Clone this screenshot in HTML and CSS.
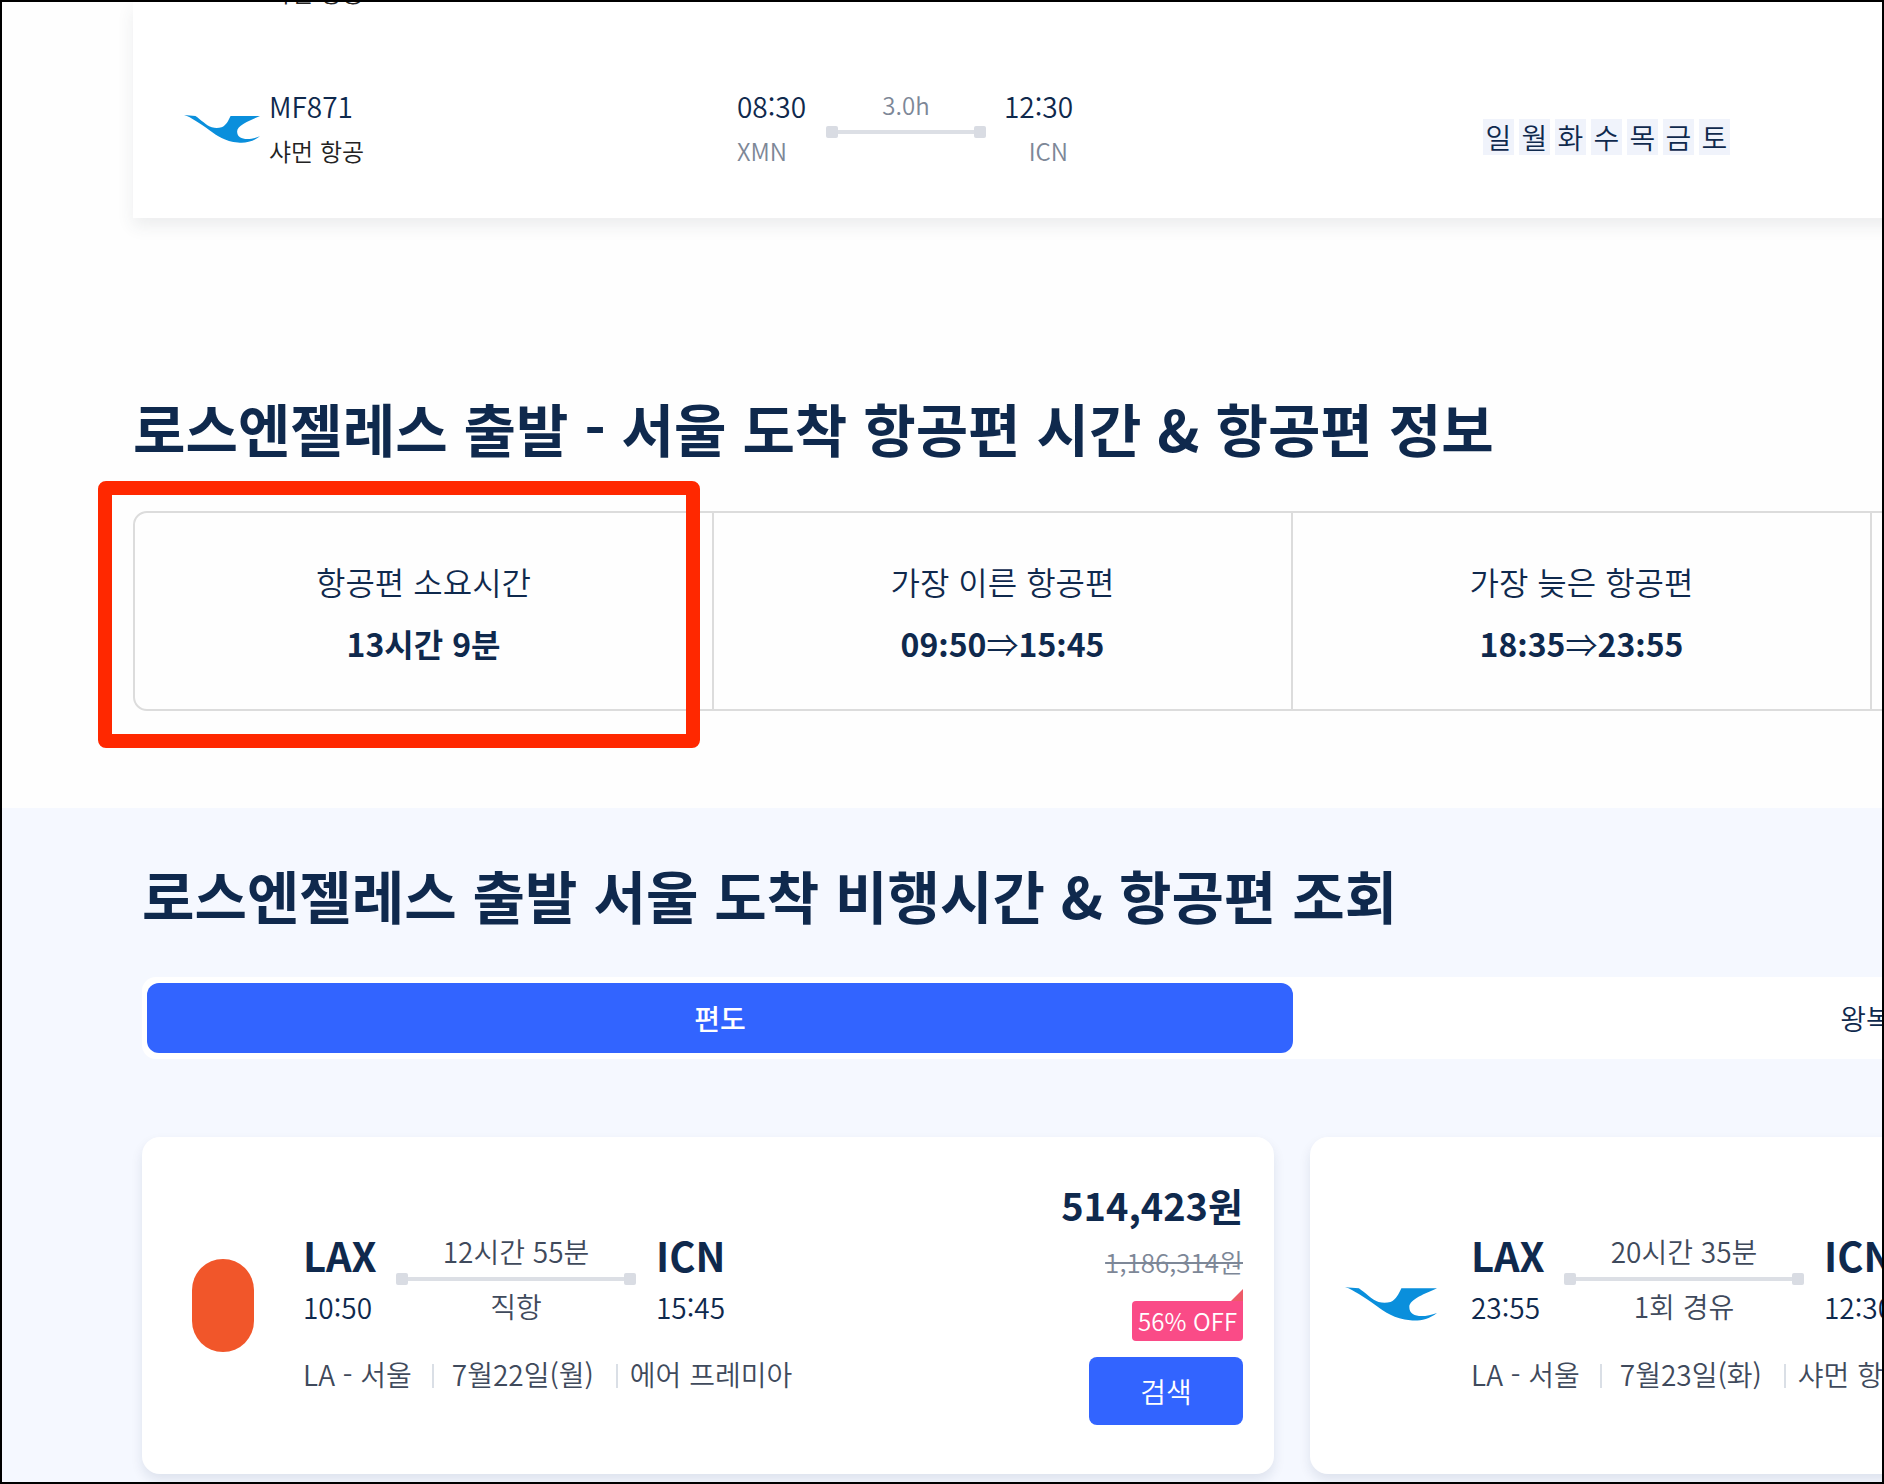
FILE: index.html
```html
<!DOCTYPE html>
<html lang="ko">
<head>
<meta charset="utf-8">
<title>로스엔젤레스 출발 서울 도착 항공편</title>
<link rel="stylesheet" href="styles.css">
</head>
<body>
<svg width="0" height="0" class="defs" aria-hidden="true">
  <symbol id="bird" viewBox="0 0 93 34">
    <path fill="#0a8fdc" d="M0 0 L14 1 C20 5 28 13 34 15 C38 16 42 16 46 15 C52 12 54 7 57 1 L93 1 C82 6 65 12 65 20 C65 31 80 31 93 26 C84 33 74 34.500 66 33.500 C50 32 40 25 32 19 C25 14 20 11 14 7 C9 4 5 1 0 0 Z"/>
  </symbol>
</svg>

<section class="schedule">
  <div class="flight">
    <svg class="logo-sm blank" aria-hidden="true"></svg>
    <p class="airline">샤먼 항공</p>
  </div>
  <div class="flight">
    <svg class="logo-sm" aria-hidden="true"><use href="#bird"/></svg>
    <div class="carrier">
      <p class="code">MF871</p>
      <p class="airline">샤먼 항공</p>
    </div>
    <div class="times">
      <div>
        <p class="code">08:30</p>
        <p class="muted">XMN</p>
      </div>
      <div class="leg">
        <p class="muted">3.0h</p>
        <span class="bar"></span>
      </div>
      <div class="arrive">
        <p class="code">12:30</p>
        <p class="muted">ICN</p>
      </div>
    </div>
    <div class="days"><span>일</span><span>월</span><span>화</span><span>수</span><span>목</span><span>금</span><span>토</span></div>
  </div>
</section>

<section class="facts">
  <h2>로스엔젤레스 출발 - 서울 도착 항공편 시간 &amp; 항공편 정보</h2>
  <div class="fact-area">
    <div class="fact-grid">
      <div class="fact"><p>항공편 소요시간</p><strong>13시간 9분</strong></div>
      <div class="fact"><p>가장 이른 항공편</p><strong>09:50<span class="arrow">⇒</span>15:45</strong></div>
      <div class="fact"><p>가장 늦은 항공편</p><strong>18:35<span class="arrow">⇒</span>23:55</strong></div>
      <div class="fact"></div>
    </div>
    <div class="highlight"></div>
  </div>
</section>

<section class="search">
  <h2>로스엔젤레스 출발 서울 도착 비행시간 &amp; 항공편 조회</h2>
  <div class="tabs">
    <button class="tab active" type="button">편도</button>
    <button class="tab" type="button">왕복</button>
  </div>
  <div class="cards">
    <article class="card">
      <div class="logo"><span class="capsule"></span></div>
      <div class="trip">
        <div class="route">
          <div><p class="airport">LAX</p><p class="clock">10:50</p></div>
          <div class="span"><p>12시간 55분</p><span class="bar"></span><p>직항</p></div>
          <div class="dest"><p class="airport">ICN</p><p class="clock">15:45</p></div>
        </div>
        <p class="meta"><span>LA - 서울</span><span>7월22일(월)</span><span>에어 프레미아</span></p>
      </div>
      <div class="offer">
        <p class="price">514,423원</p>
        <del>1,186,314원</del>
        <span class="badge">56% OFF</span>
        <button class="go" type="button">검색</button>
      </div>
    </article>
    <article class="card">
      <div class="logo"><svg class="bird" aria-hidden="true"><use href="#bird"/></svg></div>
      <div class="trip">
        <div class="route">
          <div><p class="airport">LAX</p><p class="clock">23:55</p></div>
          <div class="span"><p>20시간 35분</p><span class="bar"></span><p>1회 경유</p></div>
          <div class="dest"><p class="airport">ICN</p><p class="clock">12:30</p></div>
        </div>
        <p class="meta"><span>LA - 서울</span><span>7월23일(화)</span><span>샤먼 항공</span></p>
      </div>
    </article>
  </div>
</section>
</body>
</html>
```

FILE: styles.css
```css
* { box-sizing: border-box; }

body {
  margin: 0;
  height: 100vh;
  overflow: hidden;
  border: 2px solid #000;
  background: #fefefe;
  color: #0f294d;
  font-family: "Noto Sans CJK KR", sans-serif;
  font-size: 28px;
  font-weight: 350;
}

p, h2 { margin: 0; }
p { white-space: nowrap; }
.defs { position: absolute; }

h2 {
  font-size: 57px;
  line-height: 72px;
  font-weight: 700;
  white-space: nowrap;
}

/* bar with a square stop at each end */
.bar {
  display: flex;
  justify-content: space-between;
  height: 12px;
  background: linear-gradient(#dcdfe5, #dcdfe5) center / 100% 4px no-repeat;
}
.bar::before, .bar::after {
  content: "";
  width: 12px;
  border-radius: 2px;
  background: #d9dce3;
}

/* weekly schedule */
.schedule {
  display: flex;
  flex-direction: column;
  justify-content: flex-end;
  height: 216px;
  min-width: 2318px;
  margin-left: 131px;
  padding-bottom: 44px;
  background: #fff;
  clip-path: inset(0 0 -40px -40px);
  box-shadow: 0 8px 16px rgba(60, 70, 80, .09);
}
.flight {
  display: flex;
  align-items: center;
  gap: 9px;
  padding-left: 51px;
}
.flight + .flight { margin-top: 69px; }
.logo-sm { width: 76px; height: 28px; }
.code { line-height: 44px; }
.airline { font-size: 24px; line-height: 46px; color: #222; }
.carrier { width: 459px; }
.times {
  display: grid;
  grid-template-columns: 89px 160px auto 1fr;
  width: 737px;
}
.muted { font-size: 24px; line-height: 46px; color: #7d8797; }
.leg { text-align: center; }
.leg .muted { line-height: 42px; }
.arrive { padding-left: 18px; text-align: right; }
.arrive .muted { padding-right: 5px; }
.days { display: flex; gap: 5px; padding-top: 16px; }
.days span {
  width: 31px;
  line-height: 36px;
  text-align: center;
  background: #f0f3fb;
}

/* key facts */
.facts { padding: 173px 0 97px 131px; }
.fact-area { position: relative; margin-top: 48px; }
.fact-grid {
  display: grid;
  grid-template-columns: repeat(4, 1fr);
  min-width: 2320px;
  border: 2px solid #dcdcdc;
  border-radius: 14px;
}
.fact {
  padding: 37px 0 35px;
  text-align: center;
  font-size: 32px;
  line-height: 62px;
}
.fact:not(:last-child) { border-right: 2px solid #dcdcdc; }
.fact strong { display: block; font-weight: 700; }
.arrow { font-weight: 350; }
.highlight {
  position: absolute;
  top: -30px;
  left: -35px;
  width: 602px;
  height: 267px;
  border: 14px solid #ff2800;
  border-radius: 8px;
}

/* one-way / return search */
.search {
  padding: 50px 0 40px 140px;
  background: #f5f8ff;
}
.tabs {
  display: grid;
  grid-template-columns: 1fr 1fr;
  min-width: 2302px;
  margin-top: 47px;
  padding: 6px 5px;
  border-radius: 14px;
  background: #fff;
}
.tab {
  height: 70px;
  border: 0;
  border-radius: 12px;
  background: none;
  color: inherit;
  font: inherit;
}
.tab.active { background: #3264ff; color: #fff; font-weight: 500; }

.cards {
  display: grid;
  grid-template-columns: 1fr 1fr;
  gap: 36px;
  min-width: 2300px;
  margin-top: 78px;
}
.card {
  display: flex;
  align-items: flex-start;
  min-height: 337px;
  padding: 0 31px 0 35px;
  border-radius: 18px;
  background: #fff;
  box-shadow: 0 6px 12px rgba(15, 41, 77, .1);
}
.logo {
  display: flex;
  align-self: center;
  justify-content: center;
  width: 92px;
  margin-right: 34px;
}
.bird { width: 92px; height: 34px; margin-bottom: 4px; }
.capsule {
  width: 62px;
  height: 93px;
  border-radius: 31px;
  background: #f1562a;
}
.trip { flex: 1; padding-top: 92px; color: #3f4a5c; }
.route { display: grid; grid-template-columns: 93px 240px auto; }
.route > div { line-height: 52px; }
.airport { font-size: 40px; font-weight: 700; color: #0f294d; }
.clock { color: #0f294d; }
.span { text-align: center; }
.route .span p { line-height: 42px; }
.route .span p:first-child { line-height: 44px; }
.dest { padding-left: 20px; }
.meta { display: flex; align-items: center; margin-top: 21px; line-height: 40px; }
.meta span + span::before {
  content: "";
  display: inline-block;
  width: 2px;
  height: 24px;
  margin: 0 18px 0 20px;
  vertical-align: -2px;
  background: #dadfe6;
}
.meta span:last-child::before { margin: 0 12px 0 22px; }

.offer {
  display: flex;
  flex-direction: column;
  align-items: flex-end;
  padding-top: 40px;
}
.price { font-size: 38px; line-height: 56px; font-weight: 700; }
del { margin-top: 9px; font-size: 26px; line-height: 40px; color: #7d8797; }
.badge {
  position: relative;
  margin-top: 19px;
  padding: 0 6px;
  border-radius: 4px 0 4px 4px;
  background: #fa4b87;
  color: #fff;
  font-size: 24px;
  line-height: 40px;
}
.badge::before {
  content: "";
  position: absolute;
  right: 0;
  bottom: 100%;
  border-left: 12px solid transparent;
  border-bottom: 12px solid #ee5a68;
}
.go {
  width: 154px;
  height: 68px;
  margin-top: 16px;
  border: 0;
  border-radius: 8px;
  background: #3264ff;
  color: #fff;
  font: inherit;
}
```
